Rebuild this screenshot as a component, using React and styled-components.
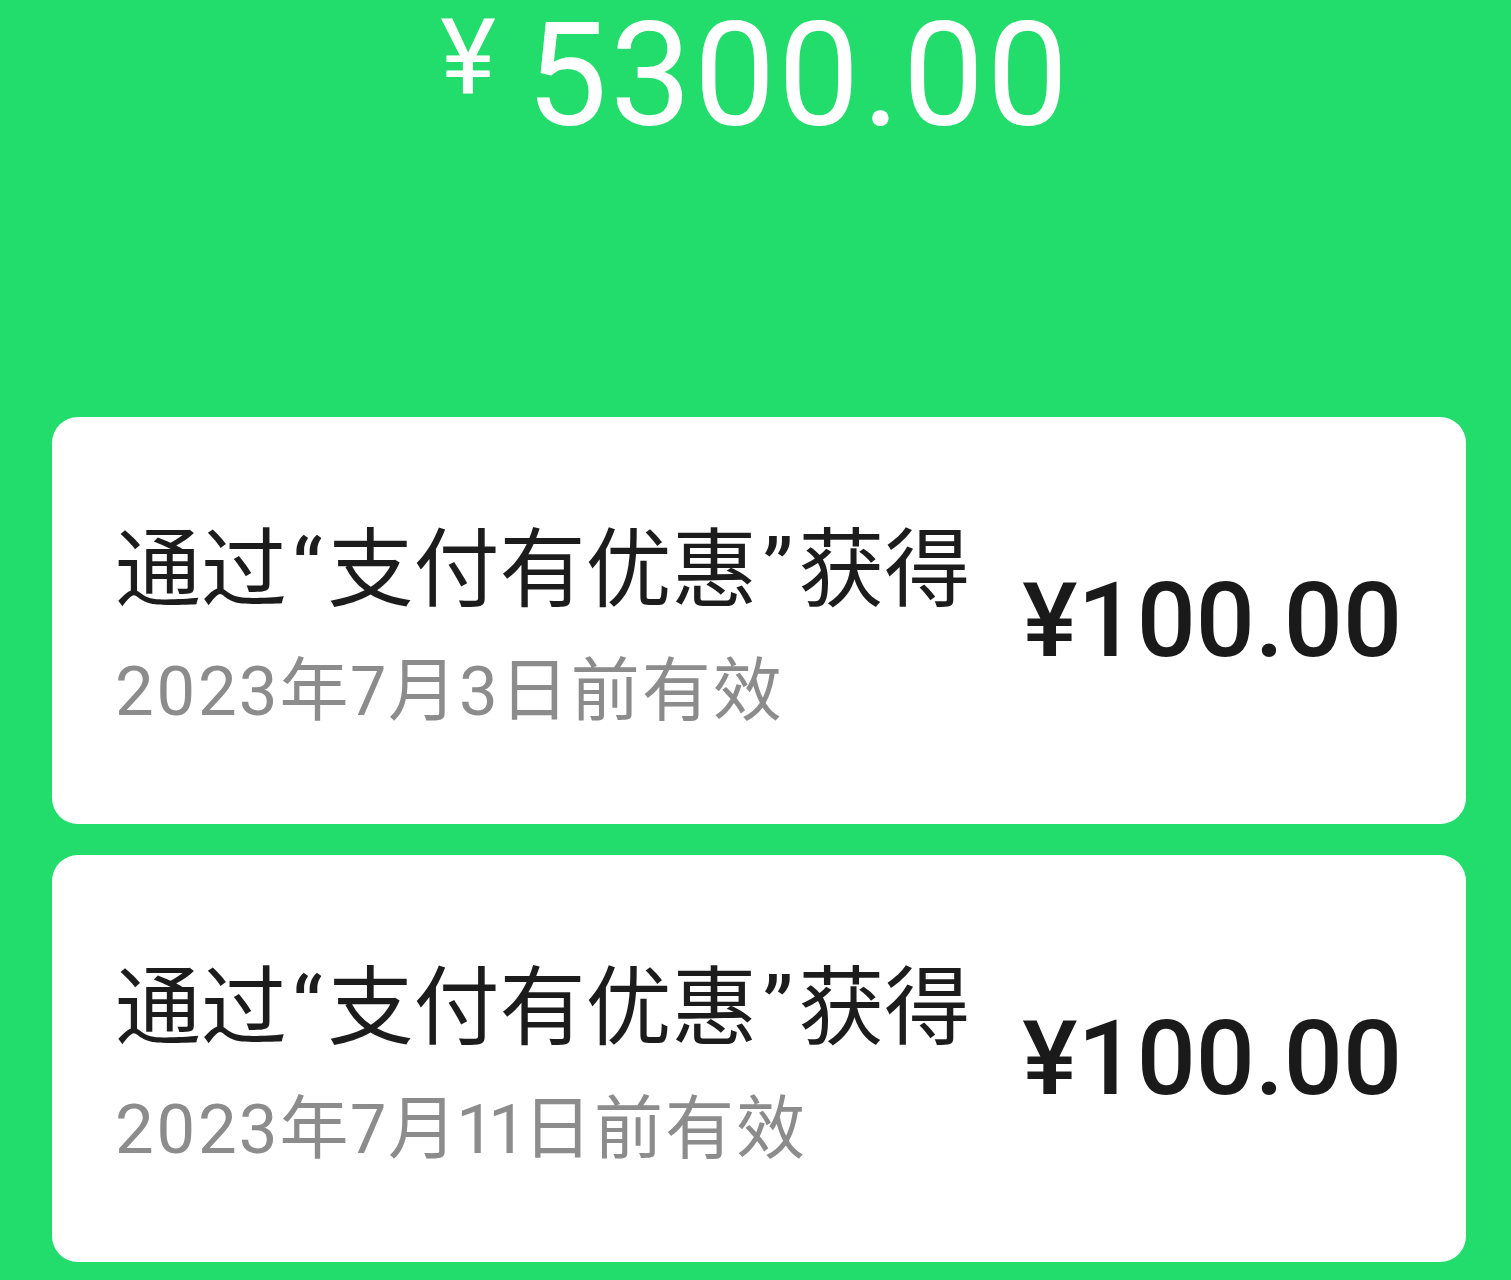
import React from "react";
import styled, { createGlobalStyle } from "styled-components";

const GlobalStyle = createGlobalStyle`
  html, body {
    margin: 0;
    padding: 0;
    background: #22dc6c;
  }
  body {
    font-family: Roboto, "Noto Sans CJK SC", sans-serif;
  }
`;

const Page = styled.div`
  width: 1511px;
  height: 1280px;
  overflow: hidden;
  background: #22dc6c;
  display: flex;
  flex-direction: column;
`;

const Header = styled.div`
  height: 414px;
  padding-top: 3px;
  display: flex;
  justify-content: center;
  align-items: flex-start;
  color: #fff;
  font-family: Roboto, "Liberation Sans", sans-serif;
`;

const Yen = styled.span`
  font-size: 106px;
  line-height: 1;
  margin-top: 2px;
  margin-right: 30px;
`;

const Total = styled.span`
  font-size: 145px;
  line-height: 1;
  letter-spacing: 2.5px;
`;

const List = styled.div`
  display: flex;
  flex-direction: column;
  gap: 31px;
  padding: 0 45px 0 52px;
`;

const Card = styled.div`
  height: 407px;
  box-sizing: border-box;
  background: #fff;
  border-radius: 26px;
  display: flex;
  align-items: center;
  justify-content: space-between;
  padding: 0 64px 0 63px;
`;

const Info = styled.div`
  display: flex;
  flex-direction: column;
  gap: 43px;
  padding-top: 12px;
  white-space: nowrap;
`;

const Title = styled.div`
  font-family: Roboto, "Noto Sans CJK SC", sans-serif;
  font-size: 86px;
  line-height: 1;
  color: #1c1c1c;
`;

const Quote = styled.span`
  margin: 0 5px;
`;

const Expire = styled.div`
  font-family: Roboto, "Noto Sans CJK SC", sans-serif;
  font-size: 69px;
  line-height: 1;
  letter-spacing: 2px;
  font-variant-numeric: proportional-nums;
  color: #8c8c8c;
`;

const Amount = styled.div`
  font-family: Roboto, "Liberation Sans", sans-serif;
  font-weight: 500;
  font-size: 104px;
  line-height: 1;
  color: #1a1a1a;
`;

const coupons = [
  { source: "支付有优惠", expire: "2023年7月3日前有效", amount: "¥100.00" },
  { source: "支付有优惠", expire: "2023年7月11日前有效", amount: "¥100.00" },
];

export default function App() {
  return (
    <Page>
      <GlobalStyle />
      <Header>
        <Yen>¥</Yen>
        <Total>5300.00</Total>
      </Header>
      <List>
        {coupons.map((c, i) => (
          <Card key={i}>
            <Info>
              <Title>
                通过<Quote>“</Quote>
                {c.source}
                <Quote>”</Quote>获得
              </Title>
              <Expire>{c.expire}</Expire>
            </Info>
            <Amount>{c.amount}</Amount>
          </Card>
        ))}
      </List>
    </Page>
  );
}
